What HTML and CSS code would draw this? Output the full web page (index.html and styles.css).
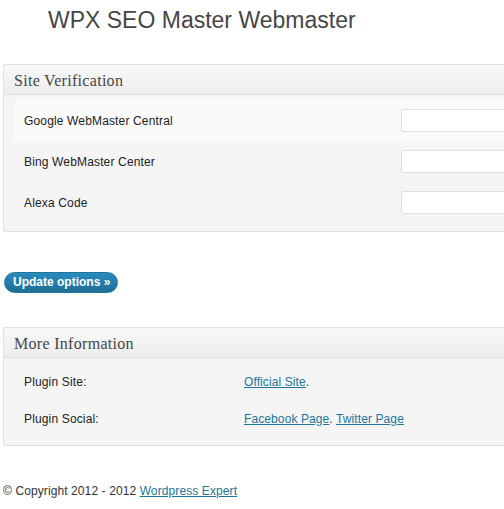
FILE: index.html
```html
<!DOCTYPE html>
<html>
<head>
<meta charset="utf-8">
<link rel="stylesheet" href="styles.css">
</head>
<body>
<div class="page">
  <h2 class="title">WPX SEO Master Webmaster</h2>

  <div class="postbox">
    <h3 class="postbox-head">Site Verification</h3>
    <div class="postbox-body">
      <div class="row row-alt">
        <span class="label">Google WebMaster Central</span>
        <input class="field" type="text">
      </div>
      <div class="row">
        <span class="label">Bing WebMaster Center</span>
        <input class="field" type="text">
      </div>
      <div class="row">
        <span class="label">Alexa Code</span>
        <input class="field" type="text">
      </div>
    </div>
  </div>

  <button class="btn" type="button">Update options »</button>

  <div class="postbox postbox-info">
    <h3 class="postbox-head">More Information</h3>
    <div class="postbox-body">
      <div class="info-row">
        <span class="label">Plugin Site:</span>
        <span><a href="#">Official Site</a>.</span>
      </div>
      <div class="info-row">
        <span class="label">Plugin Social:</span>
        <span><a href="#">Facebook Page</a>. <a href="#">Twitter Page</a></span>
      </div>
    </div>
  </div>

  <p class="footer">© Copyright 2012 - 2012 <a href="#">Wordpress Expert</a></p>
</div>
</body>
</html>
```

FILE: styles.css
```css
html, body {
  margin: 0;
  padding: 0;
  background: #ffffff;
}

body {
  font-family: "Liberation Sans", Arial, sans-serif;
  font-size: 12px;
  letter-spacing: 0.1px;
  color: #333333;
}

.page {
  padding: 0 0 0 3px;
}

.title {
  margin: 0;
  padding: 2px 0 0 45px;
  font-family: "Liberation Sans", Arial, sans-serif;
  font-weight: normal;
  font-size: 23px;
  letter-spacing: 0;
  line-height: 36px;
  color: #464646;
}

.postbox {
  margin-top: 26px;
  border: 1px solid #dfdfdf;
  border-right: 0;
  border-radius: 3px 0 0 3px;
  background: #f5f5f5;
}

.postbox-head {
  margin: 0;
  height: 29px;
  border-bottom: 1px solid #dfdfdf;
  background: linear-gradient(to bottom, #f9f9f9, #ececec);
  padding: 0 10px;
  font-family: "Liberation Serif", Georgia, serif;
  font-weight: normal;
  font-size: 16px;
  letter-spacing: 0.3px;
  line-height: 31px;
  color: #464646;
  border-radius: 3px 0 0 0;
}

.postbox-body {
  padding: 5px 0 8px 10px;
}

.row {
  display: grid;
  grid-template-columns: 387px 1fr;
  align-items: center;
  height: 41px;
}

.row-alt {
  background: #fafafa;
}

.label {
  padding-left: 10px;
  color: #222222;
  letter-spacing: 0.15px;
}

.field {
  box-sizing: border-box;
  height: 23px;
  width: 100%;
  margin: 0;
  border: 1px solid #dfdfdf;
  border-right: 0;
  border-radius: 3px 0 0 3px;
  background: #ffffff;
}

.btn {
  display: block;
  margin: 40px 0 0 1px;
  height: 21px;
  padding: 0 7px 0 8px;
  border: 1px solid #21759b;
  border-radius: 11px;
  background: linear-gradient(to bottom, #2a8bbd, #1e6e96);
  color: #ffffff;
  font-family: "Liberation Sans", Arial, sans-serif;
  font-weight: bold;
  font-size: 12px;
  letter-spacing: 0;
  line-height: 19px;
}

.postbox-info {
  margin-top: 34px;
}

.info-row {
  display: grid;
  grid-template-columns: 230px 1fr;
  align-items: center;
  height: 37px;
}

a {
  color: #21759b;
  text-decoration: underline;
}

.footer {
  margin: 36px 0 0 0;
  line-height: 18px;
  color: #333333;
}
```
